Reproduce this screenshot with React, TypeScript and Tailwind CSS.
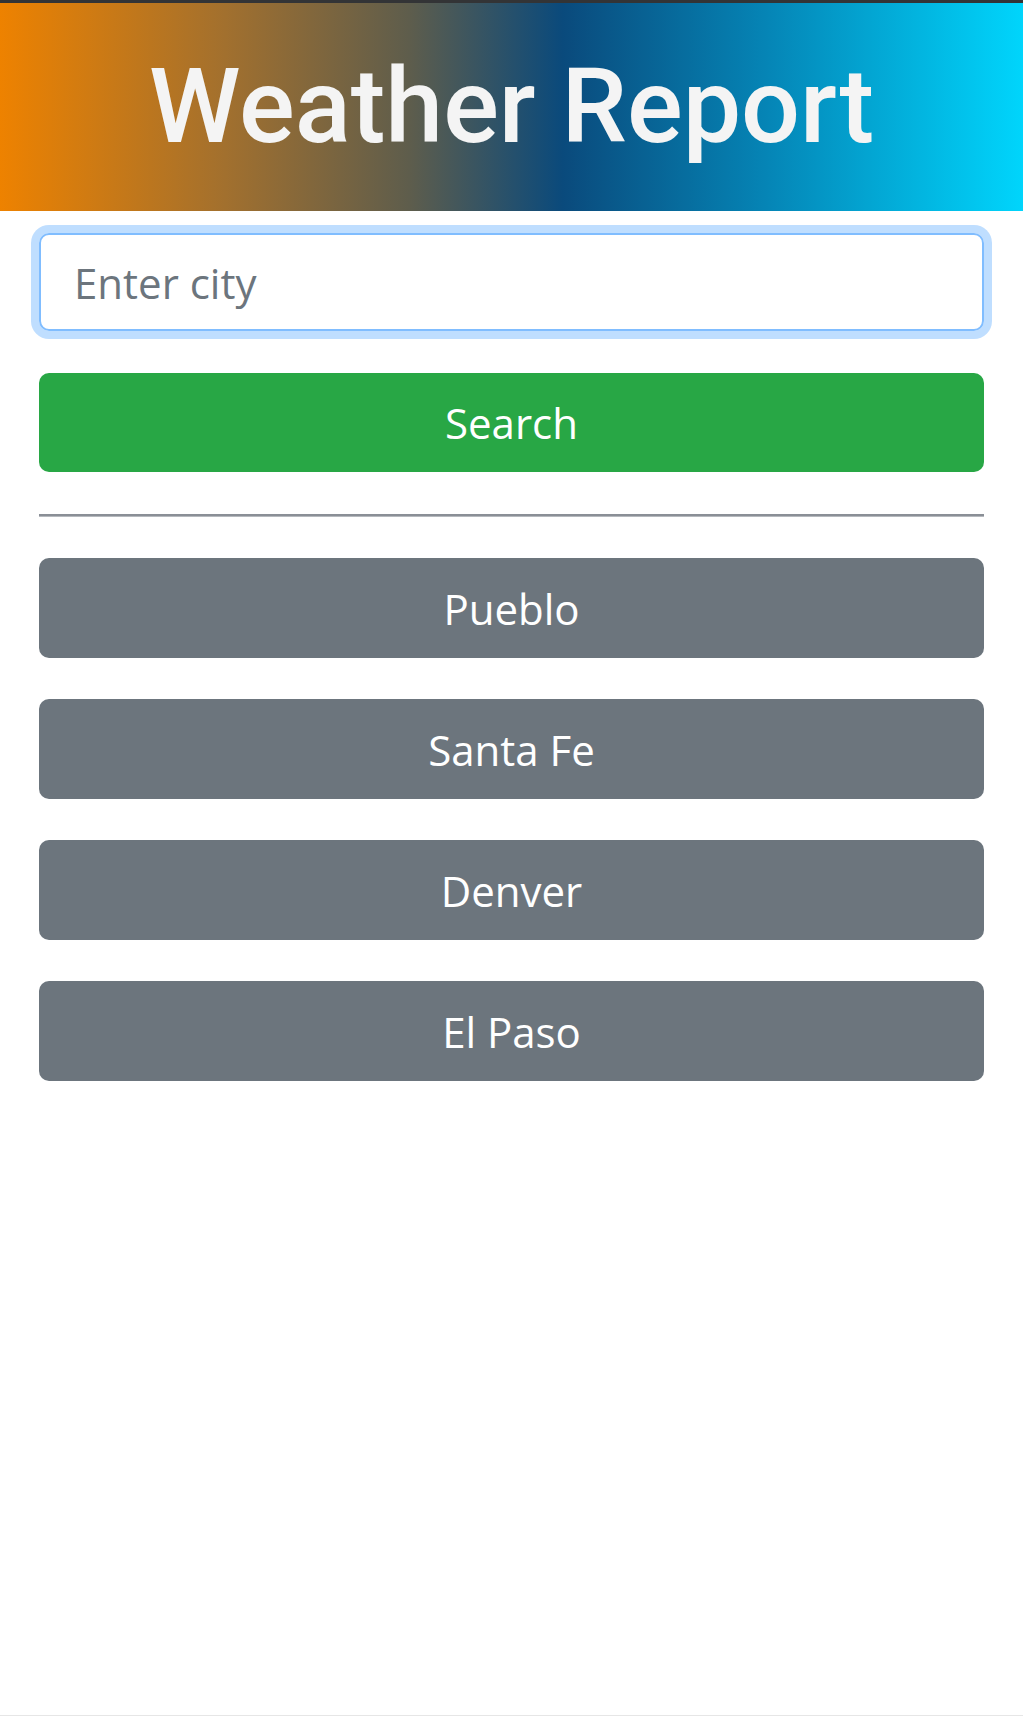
import React from "react";

const cities = ["Pueblo", "Santa Fe", "Denver", "El Paso"];

export default function App() {
  return (
    <div className="min-h-[1716px] bg-white flex flex-col font-['Open_Sans',sans-serif]">
      <div className="h-[3px] bg-[#333436]" />
      <header className="h-[208px] flex items-center justify-center bg-[linear-gradient(to_right,#ee8200_0%,#a2702e_22%,#5e5d4c_40%,#0a4a7c_55%,#0585b6_75%,#00d5fc_100%)]">
        <h1 className="font-['Roboto',sans-serif] font-medium text-[104px] leading-none text-[#f4f4f4] tracking-[0px]">
          Weather Report
        </h1>
      </header>
      <main className="px-[39px] pt-[22px] flex flex-col">
        <input
          type="text"
          placeholder="Enter city"
          className="h-[98px] w-full border-2 border-[#80bdff] rounded-[10px] shadow-[0_0_0_8px_#bfdeff] px-[33px] text-[42px] text-[#495057] placeholder:text-[#6c757d] outline-none font-['Open_Sans',sans-serif]"
        />
        <button className="mt-[42px] h-[99px] w-full rounded-[10px] bg-[#28a745] text-white text-[42px] font-['Open_Sans',sans-serif]">
          Search
        </button>
        <div className="mt-[42px] h-[3px] bg-[linear-gradient(to_bottom,#8a8f96_0%,#8a8f96_60%,#d5d7da_100%)]" />
        <div className="mt-[41px] flex flex-col gap-[41px]">
          {cities.map((c) => (
            <button
              key={c}
              className="h-[100px] w-full rounded-[10px] bg-[#6c757d] text-white text-[42px] font-['Open_Sans',sans-serif]"
            >
              {c}
            </button>
          ))}
        </div>
      </main>
      <div className="mt-auto h-[1px] bg-[#e6e6e6]" />
    </div>
  );
}
